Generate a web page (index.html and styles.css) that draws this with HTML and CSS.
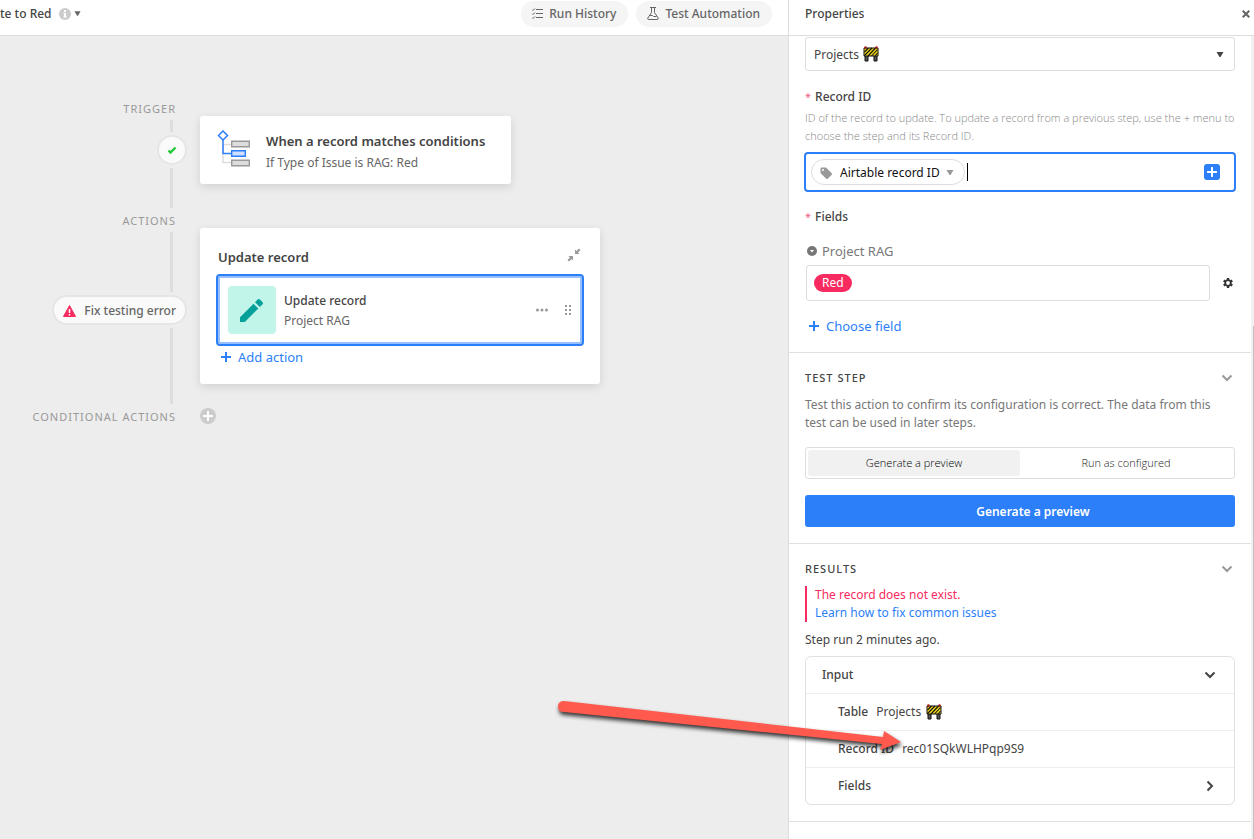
FILE: index.html
```html
<!DOCTYPE html>
<html lang="en">
<head>
    <meta charset="UTF-8">
    <meta name="viewport" content="width=device-width, initial-scale=1.0">
    <title>Automation</title>
    <link rel="stylesheet" href="styles.css">
</head>
<body>
    <svg width="0" height="0" class="defs">
        <symbol id="barrier" viewBox="0 0 16 16">
            <path d="M2 9h3v6H2zM11 9h3v6h-3z" fill="#555" stroke="#111"/>
            <path d="M1 2h14v8H1z" fill="#f2d81c" stroke="#111"/>
            <path d="M1.500 6l4-4M1.500 9.500L9 2M5 10l7.500-8M8.500 10l6-6.500M12 10l2.500-3" stroke="#111" stroke-width="1.100"/>
            <circle cx="2.500" cy="1.500" r="1.300" fill="#a11d1d"/>
            <circle cx="13.500" cy="1.500" r="1.300" fill="#a11d1d"/>
        </symbol>
        <symbol id="plus" viewBox="0 0 10 10">
            <path d="M5 0v10M0 5h10" stroke="currentColor" stroke-width="2"/>
        </symbol>
        <symbol id="chevron" viewBox="0 0 12 8">
            <path d="M1.500 1.500L6 6l4.500-4.500" fill="none" stroke="currentColor" stroke-width="2"/>
        </symbol>
        <symbol id="caret" viewBox="0 0 8 5">
            <path d="M0.500 0h7L4.500 5h-1z" fill="currentColor"/>
        </symbol>
    </svg>

    <div class="app">
        <main class="editor">
            <header class="topbar">
                <div class="title">te to Red</div>
                <button class="title-menu" aria-label="Automation info">
                    <svg width="12" height="12" viewBox="0 0 12 12"><circle cx="6" cy="6" r="6" fill="#ccc"/><path d="M5 2h2v2H5zM4.500 5H7v3.500h.700V9.500H4.300V8.500H5V6h-.500z" fill="#fff"/></svg>
                    <svg width="7" height="5"><use href="#caret"/></svg>
                </button>
                <div class="topbar-actions">
                    <button class="pill-btn">
                        <svg width="11" height="11" viewBox="0 0 11 11" fill="none" stroke="#666"><path d="M4 1.500h7M4 5.500h7M4 9.500h7M0 1.500l1 1L3 .500M0 5.500l1 1L3 4.500M0 9.500l1 1L3 8.500"/></svg>
                        Run History
                    </button>
                    <button class="pill-btn">
                        <svg width="12" height="13" viewBox="0 0 12 13" fill="none" stroke="#666"><path d="M3 .500h6M4.500.500v5L.800 11q-.500 1.500 1 1.500h8.400q1.500 0 1-1.500L7.500 5.500v-5M2.500 8.500h3l1 1h3"/></svg>
                        Test Automation
                    </button>
                </div>
            </header>

            <div class="canvas">
                <div class="rail">
                    <div class="rail-label">TRIGGER</div>
                    <div class="line line-short"></div>
                    <div class="status status-ok">
                        <svg width="10" height="8" viewBox="0 0 10 8"><path d="M1.500 4.500L3.500 6.500 8.500 1.500" fill="none" stroke="#20c933" stroke-width="2.400"/></svg>
                    </div>
                    <div class="line line-trigger"></div>
                    <div class="rail-label">ACTIONS</div>
                    <div class="line line-action"></div>
                    <button class="status status-error">
                        <svg width="13" height="12" viewBox="0 0 13 12"><path d="M6.500 0.500L12.500 11.500H.500z" fill="#f82b60" stroke="#f82b60" stroke-linejoin="round"/><path d="M6.500 4v4M6.500 9v1.500" stroke="#fff" stroke-width="1.500"/></svg>
                        Fix testing error
                    </button>
                    <div class="line line-end"></div>
                    <div class="rail-label">CONDITIONAL ACTIONS</div>
                </div>

                <div class="steps">
                    <section class="card trigger-card">
                        <svg width="34" height="38" viewBox="0 0 34 38" fill="none">
                            <path d="M6 14v18.500h9M6 14.500h9" stroke="#ddd" stroke-width="1.500"/>
                            <path d="M6 10v13.500h9" stroke="#2d7ff9" stroke-width="1.500"/>
                            <path d="M6 1l4.500 4.500L6 10 1.500 5.500z" fill="#fff" stroke="#2d7ff9" stroke-width="1.500"/>
                            <path d="M14.700 11.200h17.600v5.600H14.700zM14.700 30.200h17.600v5.600H14.700z" fill="#ddd" stroke="#999" stroke-width="1.400"/>
                            <path d="M14.700 20.700h13.600v5.600H14.700z" fill="#cfdfff" stroke="#2d7ff9" stroke-width="1.400"/>
                        </svg>
                        <div>
                            <h2>When a record matches conditions</h2>
                            <p>If Type of Issue is RAG: Red</p>
                        </div>
                    </section>

                    <section class="card action-card">
                        <div class="card-head">
                            <h2>Update record</h2>
                            <button class="icon-btn" aria-label="Collapse">
                                <svg width="14" height="14" viewBox="0 0 14 14"><path d="M8 1.500V6h4.500L11 4.500l2.500-2.500L12 .500 9.500 3zM6 12.500V8H1.500L3 9.500.500 12 2 13.500 4.500 11z" fill="#999"/></svg>
                            </button>
                        </div>
                        <div class="step">
                            <div class="step-icon">
                                <svg width="26" height="26" viewBox="0 0 26 26" fill="#06a09b"><path d="M1 25v-4.800L14.500 6.700l4.800 4.800L5.800 25zM16 5.200l2.600-2.600q1.200-1.200 2.400 0l2.400 2.400q1.200 1.200 0 2.400L20.800 10z"/></svg>
                            </div>
                            <div class="step-text">
                                <h3>Update record</h3>
                                <p>Project RAG</p>
                            </div>
                            <button class="icon-btn" aria-label="More">
                                <svg width="12" height="4" viewBox="0 0 12 4" fill="#999"><circle cx="1.500" cy="2" r="1.500"/><circle cx="6" cy="2" r="1.500"/><circle cx="10.500" cy="2" r="1.500"/></svg>
                            </button>
                            <button class="icon-btn" aria-label="Drag">
                                <svg width="6" height="10" viewBox="0 0 6 10" fill="#999"><path d="M0 0h2v2H0zM4 0h2v2H4zM0 4h2v2H0zM4 4h2v2H4zM0 8h2v2H0zM4 8h2v2H4z"/></svg>
                            </button>
                        </div>
                        <button class="add-btn"><svg width="10" height="10"><use href="#plus"/></svg>Add action</button>
                    </section>

                    <button class="add-condition" aria-label="Add conditional actions">
                        <svg width="10" height="10"><use href="#plus"/></svg>
                    </button>
                </div>
            </div>
        </main>

        <aside class="panel">
            <header class="panel-head">
                <h2>Properties</h2>
                <button class="icon-btn" aria-label="Close">
                    <svg width="8" height="8" viewBox="0 0 8 8"><path d="M.700.700l6.600 6.600M7.300.700L.700 7.300" stroke="#666" stroke-width="2"/></svg>
                </button>
            </header>

            <div class="panel-body">
                <div class="panel-content">
                    <section class="config">
                        <div class="select-box">
                            <select aria-label="Table"><option>Projects</option></select>
                            <svg class="select-emoji" width="16" height="16"><use href="#barrier"/></svg>
                            <svg class="select-caret" width="8" height="5"><use href="#caret"/></svg>
                        </div>

                        <label class="field-label" for="record-id"><span class="required">*</span>Record ID</label>
                        <p class="help">ID of the record to update. To update a record from a previous step, use the + menu to choose the step and its Record ID.</p>
                        <div class="token-input">
                            <button class="token">
                                <svg width="12" height="12" viewBox="0 0 12 12"><path fill-rule="evenodd" d="M.500 1.500q0-1 1-1H6L11.500 6q1 1 0 2L8 11.500q-1 1-2 0L.500 6zM2 3a1 1 0 1 0 2 0a1 1 0 1 0-2 0z" fill="#999"/></svg>
                                Airtable record ID
                                <svg width="8" height="5"><use href="#caret"/></svg>
                            </button>
                            <span class="text-cursor"></span>
                            <input id="record-id" type="text">
                            <button class="insert-btn" aria-label="Insert value"><svg width="10" height="10"><use href="#plus"/></svg></button>
                        </div>

                        <div class="field-label"><span class="required">*</span>Fields</div>
                        <div class="field-name">
                            <svg width="10" height="10" viewBox="0 0 10 10"><circle cx="5" cy="5" r="5" fill="#777"/><path d="M3 4h4L5 6.500z" fill="#fff"/></svg>
                            Project RAG
                        </div>
                        <div class="field-row">
                            <button class="field-value"><span class="tag">Red</span></button>
                            <button class="icon-btn" aria-label="Field settings">
                                <svg width="10" height="10" viewBox="0 0 10 10" fill="none" stroke="#333"><circle cx="5" cy="5" r="2.800" stroke-width="1.800"/><path d="M5 0v2M5 8v2M.700 2.500l1.600 1M7.700 6.500l1.600 1M.700 7.500l1.600-1M7.700 3.500l1.600-1" stroke-width="2.400"/></svg>
                            </button>
                        </div>
                        <button class="add-btn choose-btn"><svg width="10" height="10"><use href="#plus"/></svg>Choose field</button>
                    </section>

                    <section class="test">
                        <div class="section-head">
                            <h3>TEST STEP</h3>
                            <button class="icon-btn" aria-label="Toggle test step"><svg width="12" height="8"><use href="#chevron"/></svg></button>
                        </div>
                        <p>Test this action to confirm its configuration is correct. The data from this test can be used in later steps.</p>
                        <div class="segmented">
                            <button class="selected">Generate a preview</button>
                            <button>Run as configured</button>
                        </div>
                        <button class="primary">Generate a preview</button>
                    </section>

                    <section class="results">
                        <div class="section-head">
                            <h3>RESULTS</h3>
                            <button class="icon-btn" aria-label="Toggle results"><svg width="12" height="8"><use href="#chevron"/></svg></button>
                        </div>
                        <div class="error">
                            <p>The record does not exist.</p>
                            <a href="#">Learn how to fix common issues</a>
                        </div>
                        <p class="step-run">Step run 2 minutes ago.</p>
                        <div class="result-box">
                            <div class="result-row result-head">
                                <strong>Input</strong>
                                <button class="icon-btn" aria-label="Collapse input"><svg width="12" height="8"><use href="#chevron"/></svg></button>
                            </div>
                            <div class="result-row"><strong>Table</strong><span>Projects</span><svg class="row-emoji" width="16" height="16"><use href="#barrier"/></svg></div>
                            <div class="result-row"><strong>Record ID</strong><span>rec01SQkWLHPqp9S9</span></div>
                            <div class="result-row">
                                <strong>Fields</strong>
                                <button class="icon-btn" aria-label="Expand fields"><svg width="8" height="12" viewBox="0 0 8 12"><path d="M1.500 1.500L6 6l-4.500 4.500" fill="none" stroke="currentColor" stroke-width="2"/></svg></button>
                            </div>
                        </div>
                    </section>
                </div>
                <div class="scroll-track"><div class="scroll-thumb"></div></div>
            </div>
        </aside>

        <svg class="arrow" width="350" height="60" viewBox="0 0 350 60">
            <path d="M9 6Q3 6 3 11.500T9 17L327 49 325 55 346 47 329 36 328 42z" fill="#ff5a4d"/>
        </svg>
    </div>
</body>
</html>
```
FILE: styles.css
```css
* { box-sizing: border-box; }
body { margin: 0; font-family: "Noto Sans", "Open Sans", sans-serif; font-size: 12px; line-height: 18px; color: #444; background: #fff; }
h2, h3, p { margin: 0; font-size: 12px; font-weight: 500; }
p { font-weight: 400; }
button { padding: 0; border: 0; background: none; font: inherit; color: inherit; cursor: pointer; }
svg { display: block; flex: none; }
a { color: #2d7ff9; text-decoration: none; }
.defs { position: absolute; }

.app { position: relative; display: flex; min-height: 100vh; overflow: hidden; }
.editor { flex: 1; display: flex; flex-direction: column; min-width: 0; }

/* top bar */
.topbar { display: flex; align-items: center; height: 36px; padding-bottom: 8px; border-bottom: 1px solid #ddd; }
.title { white-space: nowrap; font-weight: 500; }
.title-menu { display: flex; align-items: center; gap: 3px; margin-left: 7px; color: #666; }
.topbar-actions { display: flex; gap: 8px; margin-left: auto; padding-right: 16px; }
.pill-btn { display: flex; align-items: center; gap: 6px; height: 26px; padding: 0 12px 0 11px; border-radius: 14px; background: #f5f5f5; color: #666; font-weight: 500; }

/* canvas */
.canvas { flex: 1; display: flex; gap: 13px; padding-top: 63px; background: #ededed; }
.rail { display: flex; flex-direction: column; align-items: flex-end; gap: 3px; width: 187px; }
.rail-label { height: 18px; margin-right: 11px; font-size: 11px; line-height: 20px; letter-spacing: 1px; color: #999; white-space: nowrap; }
.line { width: 3px; margin-right: 14px; background: #ddd; }
.line-short { height: 12px; }
.line-trigger { height: 40px; }
.line-action { height: 60px; }
.line-end { height: 76px; }
.status { display: flex; align-items: center; justify-content: center; height: 30px; border: 2px solid #e5e5e5; border-radius: 15px; background: #fafafa; }
.status-ok { width: 30px; }
.status-error { gap: 8px; padding: 1px 9px 0; color: #666; font-weight: 500; }

.steps { display: flex; flex-direction: column; align-items: flex-start; padding-top: 17px; }
.card { border-radius: 3px; background: #fff; box-shadow: 0 3px 10px rgba(0, 0, 0, 0.12); }
.card h2 { font-size: 13px; font-weight: 600; }
.card p { color: #666; }
.trigger-card { display: flex; gap: 15px; height: 68px; margin-bottom: 44px; padding: 14px 26px 0 17px; }
.trigger-card h2 { margin: 2px 0 4px; }
.action-card { width: 400px; height: 156px; margin-bottom: 24px; padding: 20px 16px 0; }
.card-head { display: flex; align-items: flex-start; justify-content: space-between; height: 18px; padding: 0 3px 0 2px; }
.step { display: flex; align-items: center; height: 72px; margin: 8px 0 2px; padding: 0 11px 0 10px; border: 2px solid #2d7ff9; border-radius: 4px; box-shadow: inset 0 0 0 2px #96bffc; }
.step-icon { display: flex; align-items: center; justify-content: center; width: 48px; height: 48px; margin-right: 8px; border-radius: 4px; background: #c2f5e9; }
.step-text { flex: 1; padding-top: 2px; line-height: 20px; }
.step .icon-btn { margin-left: 17px; }
.add-btn { display: flex; align-items: center; gap: 7px; margin-left: 5px; color: #2d7ff9; font-size: 13px; }
.add-condition { display: flex; align-items: center; justify-content: center; width: 16px; height: 16px; border-radius: 8px; background: #ccc; color: #fff; }

/* properties panel */
.panel { display: flex; flex-direction: column; width: 466px; border-left: 1px solid #ddd; }
.panel-head { display: flex; align-items: center; justify-content: space-between; height: 36px; padding: 0 4px 8px 16px; border-bottom: 1px solid #ddd; }
.panel-body { flex: 1; display: flex; }
.panel-content { flex: 1; }
.panel-content section { padding: 0 16px; border-bottom: 1px solid #e0e0e0; }
.scroll-track { width: 3px; padding: 290px 0 0 2px; background: #f1f1f1; }
.scroll-thumb { height: 100%; background: #c1c1c1; }

.panel-content .config { height: 317px; padding-top: 1px; }
.select-box { position: relative; margin-bottom: 17px; }
select { display: block; width: 100%; height: 34px; padding: 2px 8px 0; border: 1px solid #ddd; border-radius: 3px; background: #fff; color: #444; font: inherit; appearance: none; }
.select-emoji { position: absolute; top: 9px; left: 58px; }
.select-caret { position: absolute; top: 15px; right: 11px; color: #444; }
.field-label { display: flex; font-weight: 500; }
.required { margin-right: 4px; color: #f0607f; font-size: 11px; font-weight: 400; }
.help { margin: 3px 0 7px; font-family: "Open Sans", sans-serif; font-size: 11px; font-weight: 300; color: #888; }
.token-input { display: flex; align-items: center; height: 40px; margin: 0 -1px 16px; padding: 0 14px 0 5px; border: 2px solid #2d7ff9; border-radius: 4px; }
.token { display: flex; align-items: center; gap: 8px; height: 26px; padding: 1px 10px 0 8px; border: 1px solid #ddd; border-radius: 13px; color: #111; white-space: nowrap; }
.token svg:last-child { margin-left: -2px; color: #999; }
.text-cursor { width: 1px; height: 18px; margin-left: 2px; background: #000; }
.token-input input { flex: 1; min-width: 0; border: 0; outline: 0; font: inherit; }
.insert-btn { display: flex; align-items: center; justify-content: center; width: 16px; height: 16px; border-radius: 3px; background: #2d7ff9; color: #fff; }
.field-name { display: flex; align-items: center; gap: 5px; margin: 16px 2px 5px; color: #777; font-size: 13px; }
.field-row { display: flex; align-items: center; gap: 13px; margin: 0 2px 16px 1px; }
.field-value { flex: 1; display: flex; align-items: center; height: 36px; padding: 0 7px; border: 1px solid #ddd; border-radius: 3px; }
.tag { padding: 0 8px; border-radius: 9px; background: #f82b60; color: #fff; }
.choose-btn { margin-left: 4px; }

.section-head { display: flex; align-items: center; justify-content: space-between; padding-right: 2px; color: #999; }
.section-head h3 { font-size: 11px; letter-spacing: 1px; color: #444; }
.panel-content .test { height: 191px; padding-top: 16px; }
.test p { margin: 9px 0 15px; padding-right: 12px; color: #777; }
.segmented { display: flex; height: 32px; margin-bottom: 16px; padding: 2px; border: 1px solid #ddd; border-radius: 3px; font-family: "Open Sans", sans-serif; font-size: 11px; font-weight: 300; color: #222; }
.segmented button { flex: 1; border-radius: 3px; }
.segmented .selected { background: #f1f1f1; color: #000; }
.primary { display: block; width: 100%; height: 32px; padding: 2px 0 0 26px; border-radius: 3px; background: #2d7ff9; color: #fff; font-weight: 600; }

.panel-content .results { padding: 16px 16px; }
.error { margin: 8px 0 9px; padding-left: 8px; border-left: 2px solid #f82b60; color: #f82b60; }
.error a { display: block; }
.result-box { margin-top: 7px; border: 1px solid #e0e0e0; border-radius: 6px; }
.result-row { display: flex; align-items: center; height: 37px; padding: 0 20px 1px 32px; border-top: 1px solid #eee; }
.result-row strong { margin-right: 8px; font-weight: 500; }
.result-row .icon-btn { margin-left: auto; }
.result-head { height: 36px; padding: 0 18px 0 16px; border-top: 0; }
.row-emoji { margin-left: 5px; }

/* annotation arrow */
.arrow { position: absolute; top: 695px; left: 555px; filter: drop-shadow(1px 3px 2px rgba(0, 0, 0, 0.8)); pointer-events: none; }
```
